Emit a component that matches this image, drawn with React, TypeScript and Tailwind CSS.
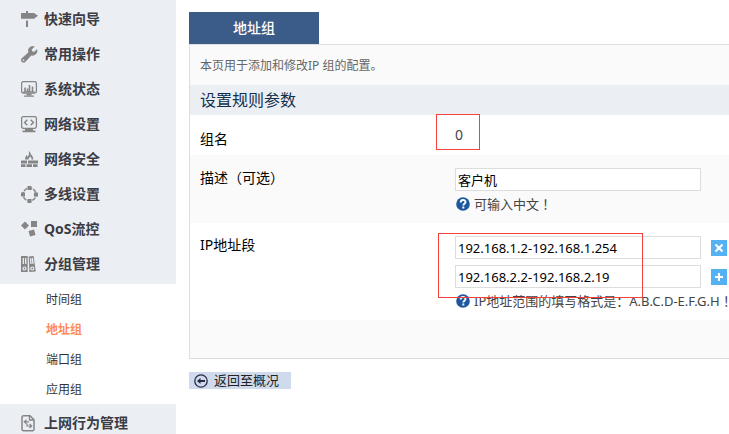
import { useState } from 'react';
import type { ReactNode } from 'react';

function MenuIcon({ children }: { children: ReactNode }) {
  return (
    <svg
      width="17"
      height="17"
      viewBox="0 0 17 17"
      fill="none"
      stroke="currentColor"
      className="shrink-0 text-[#858585]"
      aria-hidden="true"
    >
      {children}
    </svg>
  );
}

const signIcon = (
  <MenuIcon>
    <path d="M5 0h2v2h6L17 4.800l-4 2.900H0V2h5zM5 9.500h2V16H5z" fill="currentColor" stroke="none" />
  </MenuIcon>
);

const wrenchIcon = (
  <MenuIcon>
    <path
      d="M13.500 .6a4.600 4.600 0 0 0-6 5.900L.8 12.400a2.300 2.300 0 1 0 3.500 3.300l6-6.500A4.600 4.600 0 0 0 16 3.500l-2.800 2.600-2.100-.5-.5-2.200zM2.500 13.200a1 1 0 1 1 0 2 1 1 0 0 1 0-2z"
      fill="currentColor"
      fillRule="evenodd"
      stroke="currentColor"
      strokeWidth=".4"
    />
  </MenuIcon>
);

const statusIcon = (
  <MenuIcon>
    <rect x=".6" y=".6" width="14.800" height="11.400" rx="1.800" strokeWidth="1.300" />
    <path d="M4 6.500V11M6.500 7.500V11M8.500 4v7M11.500 5.500V11" strokeWidth="1.600" />
    <path d="M2.500 10.800h11M5.500 13.500h5M3 15.200h10" strokeWidth="1.300" />
  </MenuIcon>
);

const networkIcon = (
  <MenuIcon>
    <rect x=".6" y=".6" width="14.800" height="11.800" rx="1.800" strokeWidth="1.300" />
    <path d="M6.300 3.800L3.600 6.500l2.700 2.700M9.700 3.800l2.700 2.700-2.700 2.700" strokeWidth="1.500" />
    <path d="M4 13.600h8M1.500 15.300h13" strokeWidth="1.700" />
  </MenuIcon>
);

const firewallIcon = (
  <MenuIcon>
    <path
      d="M4 8.500C4 6 5 5.500 5.500 4c.8.500 1 1 1 2C8 4.500 8.500 2.500 7.500 0c2 1 2.500 3 2.300 4.500l1-1c0 1.500 1.700 2.500 1.500 5h-1.800c.3-1.500-.5-2.500-1.500-3-.2 1.500-1.500 1-1.500 3z"
      fill="currentColor"
      stroke="none"
    />
    <path d="M0 11h6M7 11h10M0 14.600h4.500M5.500 14.600H11M12 14.600h4.500" strokeWidth="2.800" />
  </MenuIcon>
);

const linesIcon = (
  <MenuIcon>
    <circle cx="8.500" cy="8.500" r="6.500" strokeWidth="1.500" strokeDasharray="4 1.100" strokeDashoffset="-3.100" />
    <path
      d="M6.500 0h4v4h-4zM6.500 13h4v4h-4zM0 6.500h4v4H0zM13 6.500h4v4h-4z"
      fill="currentColor"
      stroke="none"
    />
  </MenuIcon>
);

const qosIcon = (
  <MenuIcon>
    <path d="M4 .5l4 4-4 4-4-4zM10 0h6v6h-6zM7.500 10l5.500-1.500L14.500 14 9 15.500z" fill="currentColor" stroke="none" />
  </MenuIcon>
);

const groupIcon = (
  <MenuIcon>
    <path d="M0 0h6.700v16H0zM7.700 .6L12.600 0l2.200 15.600-6.400.4z" fill="currentColor" stroke="none" />
    <path d="M2.300 2v6M4.700 2v6M9.500 2.200l.5 5.800M11.300 2l.8 5.800" stroke="#ebeff4" strokeWidth="1.300" />
    <circle cx="3.500" cy="12.500" r="1.500" stroke="#ebeff4" strokeWidth="1.200" />
    <circle cx="11.300" cy="12.500" r="1.500" stroke="#ebeff4" strokeWidth="1.200" />
  </MenuIcon>
);

const behaviourIcon = (
  <MenuIcon>
    <path d="M2.500 .8h6.500l4 4v9.400a1.500 1.500 0 0 1-1.500 1.500h-9A1.500 1.500 0 0 1 1 14.200V2.300A1.500 1.500 0 0 1 2.500 .8z" strokeWidth="1.500" />
    <path d="M8.500 1v4H13" strokeWidth="1.300" />
    <path d="M5.500 4.800L3.300 6.800l2.200 2M3.500 6.800H8M8.500 9l2.200 2-2.200 2M10.500 11H6V8.800" strokeWidth="1.200" />
  </MenuIcon>
);

const menu = [
  { label: '快速向导', icon: signIcon },
  { label: '常用操作', icon: wrenchIcon },
  { label: '系统状态', icon: statusIcon },
  { label: '网络设置', icon: networkIcon },
  { label: '网络安全', icon: firewallIcon },
  { label: '多线设置', icon: linesIcon },
  { label: 'QoS流控', icon: qosIcon },
  { label: '分组管理', icon: groupIcon },
];

const subMenu = ['时间组', '地址组', '端口组', '应用组'];

function MenuItem({ label, icon }: { label: string; icon: ReactNode }) {
  return (
    <li>
      <a href="#" className="flex h-[35px] items-center gap-1.5 pl-[21px] text-sm font-bold text-[#3c3c44]">
        {icon}
        <span className="pb-0.5">{label}</span>
      </a>
    </li>
  );
}

function Sidebar() {
  const [active, setActive] = useState('地址组');

  return (
    <nav className="w-44 shrink-0 bg-[#ebeff4]">
      <ul className="py-0.5">
        {menu.map((item) => (
          <MenuItem key={item.label} {...item} />
        ))}
      </ul>
      <ul className="bg-white">
        {subMenu.map((label) => (
          <li key={label}>
            <a
              href="#"
              onClick={() => setActive(label)}
              className={`flex h-[30px] items-center pt-0.5 pl-[46px] text-xs ${
                active === label ? 'font-bold text-[#ff8b57]' : 'text-[#333]'
              }`}
            >
              {label}
            </a>
          </li>
        ))}
      </ul>
      <ul className="py-0.5">
        <MenuItem label="上网行为管理" icon={behaviourIcon} />
      </ul>
    </nav>
  );
}

function Hint({ children }: { children: ReactNode }) {
  return (
    <p className="flex h-[26px] items-center gap-1 pl-px text-[13px] whitespace-nowrap text-[#444]">
      <svg width="14" height="14" viewBox="0 0 14 14" className="shrink-0" aria-hidden="true">
        <circle cx="7" cy="7" r="6.800" fill="#1c57a0" />
        <path d="M4.700 5.400c0-3.200 4.800-3 4.800-.4 0 1.700-2.200 1.700-2.200 3.400" fill="none" stroke="#fff" strokeWidth="1.900" />
        <rect x="6.300" y="9.500" width="2" height="2" fill="#fff" />
      </svg>
      <span>{children}</span>
    </p>
  );
}

// full-width marks sit in the middle of their cell
function Mark({ children }: { children: string }) {
  return <span className="font-['Noto_Sans_CJK_TC',sans-serif]">{children}</span>;
}

const inputClass =
  'block h-[23px] w-[246px] shrink-0 border border-[#ddd] bg-white px-0.5 text-[13px] text-black outline-none';
const squareClass = 'flex size-4 shrink-0 items-center justify-center bg-[#54b1f4] text-white';

export default function App() {
  const [desc, setDesc] = useState('客户机');
  const [first, setFirst] = useState('192.168.1.2-192.168.1.254');
  const [second, setSecond] = useState('192.168.2.2-192.168.2.19');

  return (
    <div className="flex h-screen overflow-hidden bg-white font-['Noto_Sans','Noto_Sans_CJK_SC',sans-serif]">
      <Sidebar />

      <main className="min-w-0 flex-1 pt-3 pl-[13px]">
        <button className="block h-8 w-[130px] bg-[#3b5b89] text-sm font-medium text-white">地址组</button>

        {/* Panel */}
        <section className="border-y border-l border-[#ddd] bg-[#fafafa]">
          <p className="flex h-10 items-center pt-0.5 pl-2.5 text-xs text-[#666]">本页用于添加和修改IP 组的配置。</p>
          <h2 className="flex h-[30px] items-center bg-[#ebeff4] pl-2.5 text-base text-[#12304d]">设置规则参数</h2>

          <div className="flex h-10 bg-white pl-2.5 text-sm">
            <div className="w-[255px] shrink-0 pt-3.5 leading-5">组名</div>
            <div className="relative pt-2.5 leading-5 text-[#444]">
              0
              <span className="pointer-events-none absolute -top-px -left-[19px] h-9 w-11 border border-[#f5403c]" />
            </div>
          </div>

          <div className="flex h-[68px] pl-2.5 text-sm">
            <label htmlFor="desc" className="w-[255px] shrink-0 pt-3 leading-5">
              描述<Mark>（</Mark>可选<Mark>）</Mark>
            </label>
            <div className="pt-[13px]">
              <input id="desc" className={inputClass} value={desc} onChange={(e) => setDesc(e.target.value)} />
              <Hint>
                可输入中文<Mark>！</Mark>
              </Hint>
            </div>
          </div>

          <div className="flex h-[97px] bg-white pl-2.5 text-sm">
            <label htmlFor="range1" className="w-[255px] shrink-0 pt-3 leading-5">
              IP地址段
            </label>
            <div className="relative pt-[13px]">
              <div className="mb-1.5 flex items-center gap-2.5">
                <input id="range1" className={inputClass} value={first} onChange={(e) => setFirst(e.target.value)} />
                <button aria-label="删除" className={squareClass} onClick={() => setFirst('')}>
                  <svg width="10" height="10" viewBox="0 0 10 10" stroke="currentColor" strokeWidth="2.200">
                    <path d="M1.500 1.500l7 7M8.500 1.500l-7 7" />
                  </svg>
                </button>
              </div>
              <div className="flex items-center gap-2.5">
                <input
                  aria-label="IP地址段"
                  className={inputClass}
                  value={second}
                  onChange={(e) => setSecond(e.target.value)}
                />
                <button aria-label="添加" className={squareClass}>
                  <svg width="10" height="10" viewBox="0 0 10 10" stroke="currentColor" strokeWidth="2">
                    <path d="M5 1v8M1 5h8" />
                  </svg>
                </button>
              </div>
              <Hint>IP地址范围的填写格式是：A.B.C.D-E.F.G.H ！</Hint>
              <span className="pointer-events-none absolute top-2.5 -left-[17px] h-[65px] w-[205px] border border-[#f5403c]" />
            </div>
          </div>

          <div className="h-[38px]" />
        </section>

        <button className="mt-[13px] flex h-[17px] w-[102px] items-center gap-1.5 bg-[#cfdaec] pl-[5px] text-[13px] leading-none whitespace-nowrap text-[#222]">
          <svg width="14" height="14" viewBox="0 0 14 14" fill="none" stroke="#2a2a48" className="shrink-0">
            <circle cx="7" cy="7" r="6.200" strokeWidth="1.300" />
            <path d="M11 7H4" strokeWidth="2" />
            <path d="M3 7l3.500-3v6z" fill="#2a2a48" stroke="none" />
          </svg>
          返回至概况
        </button>
      </main>
    </div>
  );
}
